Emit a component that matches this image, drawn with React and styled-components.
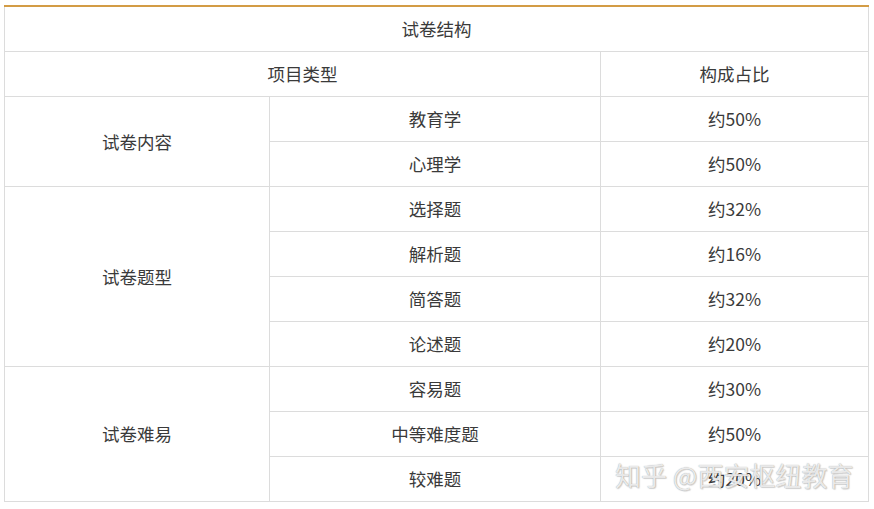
import React from "react";
import styled, { createGlobalStyle } from "styled-components";

const GlobalStyle = createGlobalStyle`
  body {
    margin: 0;
    background: #fff;
    font-family: "Noto Sans CJK SC", "Noto Sans", sans-serif;
  }
`;

const Page = styled.div`
  position: relative;
  width: 874px;
  height: 509px;
  padding: 5px 0 0 4px;
  box-sizing: border-box;
`;

const Table = styled.table`
  width: 864px;
  border-collapse: collapse;
  table-layout: fixed;
  border-top: 2px solid #d39c45;
  color: #3a3a3a;
  font-size: 17.5px;
`;

const Cell = styled.td`
  height: 44px;
  padding: 0;
  border: 1px solid #dcdcdc;
  text-align: center;
  vertical-align: middle;
  line-height: 20px;
`;

const Watermark = styled.div`
  position: absolute;
  left: 615px;
  top: 459px;
  font-size: 26px;
  line-height: 32px;
  color: rgba(245, 245, 245, 0.9);
  text-shadow: 0 0 1px rgba(90, 90, 90, 0.6), 1px 1px 1px rgba(140, 140, 140, 0.35);
  white-space: nowrap;
  pointer-events: none;
`;

const groups = [
  { name: "试卷内容", items: [["教育学", "约50%"], ["心理学", "约50%"]] },
  {
    name: "试卷题型",
    items: [["选择题", "约32%"], ["解析题", "约16%"], ["简答题", "约32%"], ["论述题", "约20%"]],
  },
  { name: "试卷难易", items: [["容易题", "约30%"], ["中等难度题", "约50%"], ["较难题", "约20%"]] },
];

export default function App() {
  return (
    <>
      <GlobalStyle />
      <Page>
        <Table>
          <colgroup>
            <col style={{ width: 265 }} />
            <col style={{ width: 331 }} />
            <col style={{ width: 268 }} />
          </colgroup>
          <tbody>
            <tr>
              <Cell colSpan={3}>试卷结构</Cell>
            </tr>
            <tr>
              <Cell colSpan={2}>项目类型</Cell>
              <Cell>构成占比</Cell>
            </tr>
            {groups.map((g) =>
              g.items.map(([item, pct], i) => (
                <tr key={g.name + item}>
                  {i === 0 && <Cell rowSpan={g.items.length}>{g.name}</Cell>}
                  <Cell>{item}</Cell>
                  <Cell>{pct}</Cell>
                </tr>
              ))
            )}
          </tbody>
        </Table>
        <Watermark>知乎 @西安枢纽教育</Watermark>
      </Page>
    </>
  );
}
